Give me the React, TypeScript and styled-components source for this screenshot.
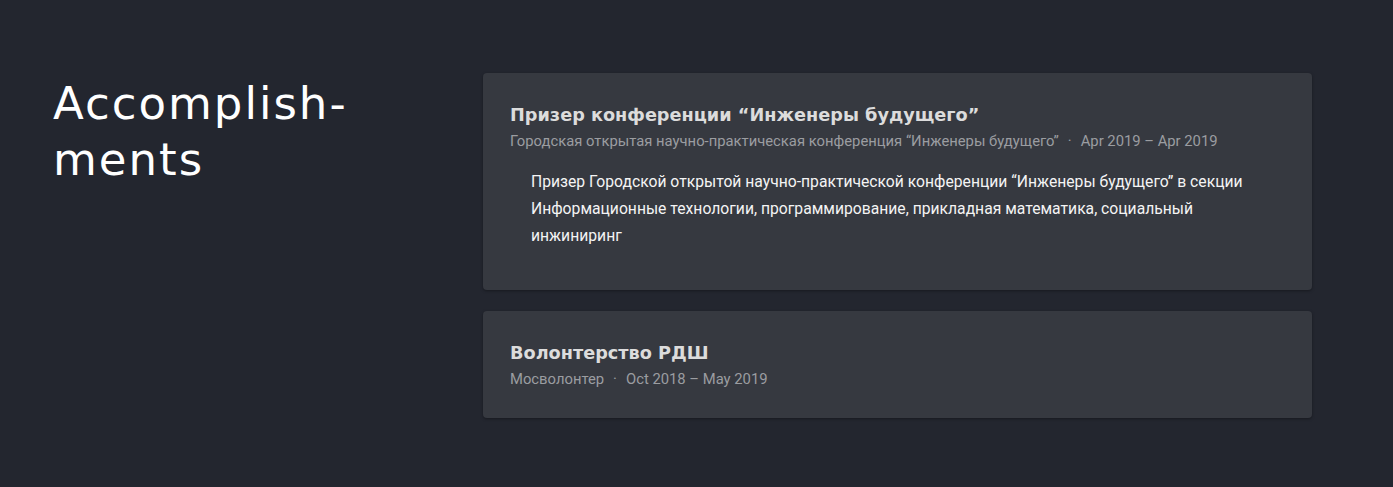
import React from "react";
import styled, { createGlobalStyle } from "styled-components";

const Global = createGlobalStyle`
  html, body { margin: 0; padding: 0; background: #23262f; }
  body { font-family: Roboto, "Noto Sans", sans-serif; }
`;

const Page = styled.main`
  display: flex;
  align-items: flex-start;
  min-height: 487px;
  box-sizing: border-box;
  padding: 73px 0 0 53px;
  background: #23262f;
`;

const SectionTitle = styled.h2`
  width: 430px;
  flex: none;
  margin: 3px 0 0 0;
  font-family: "DejaVu Sans", sans-serif;
  font-weight: 400;
  font-size: 45px;
  line-height: 56px;
  color: #ffffff;
  letter-spacing: 2px;
`;

const List = styled.div`
  display: flex;
  flex-direction: column;
  gap: 21px;
  width: 829px;
`;

const Card = styled.article`
  background: #363940;
  border-radius: 4px;
  box-shadow: 0 1px 3px rgba(0, 0, 0, 0.35);
  padding: 29px 27px 29px;
`;

const Title = styled.h3`
  margin: 0;
  font-family: "DejaVu Sans", sans-serif;
  font-weight: 700;
  font-size: 17.7px;
  line-height: 26px;
  color: #dcdcdc;
`;

const Meta = styled.div`
  display: flex;
  align-items: center;
  margin-top: 3px;
  font-size: 14.8px;
  line-height: 20px;
  color: #9b9da1;
`;

const Dot = styled.span`
  margin: 0 9px 0 9px;
`;

const Description = styled.p`
  margin: 17px 0 12px 21px;
  font-size: 15.7px;
  line-height: 27px;
  color: #f4f4f4;
  max-width: 730px;
`;

export default function App() {
  return (
    <>
      <Global />
      <Page>
        <SectionTitle>
          Accomplish-
          <br />
          ments
        </SectionTitle>
        <List>
          <Card>
            <Title>Призер конференции “Инженеры будущего”</Title>
            <Meta>
              <span>Городская открытая научно-практическая конференция “Инженеры будущего”</span>
              <Dot>·</Dot>
              <span>Apr 2019 – Apr 2019</span>
            </Meta>
            <Description>
              Призер Городской открытой научно-практической конференции “Инженеры будущего” в секции
              Информационные технологии, программирование, прикладная математика, социальный
              инжиниринг
            </Description>
          </Card>
          <Card>
            <Title>Волонтерство РДШ</Title>
            <Meta>
              <span>Мосволонтер</span>
              <Dot>·</Dot>
              <span>Oct 2018 – May 2019</span>
            </Meta>
          </Card>
        </List>
      </Page>
    </>
  );
}
